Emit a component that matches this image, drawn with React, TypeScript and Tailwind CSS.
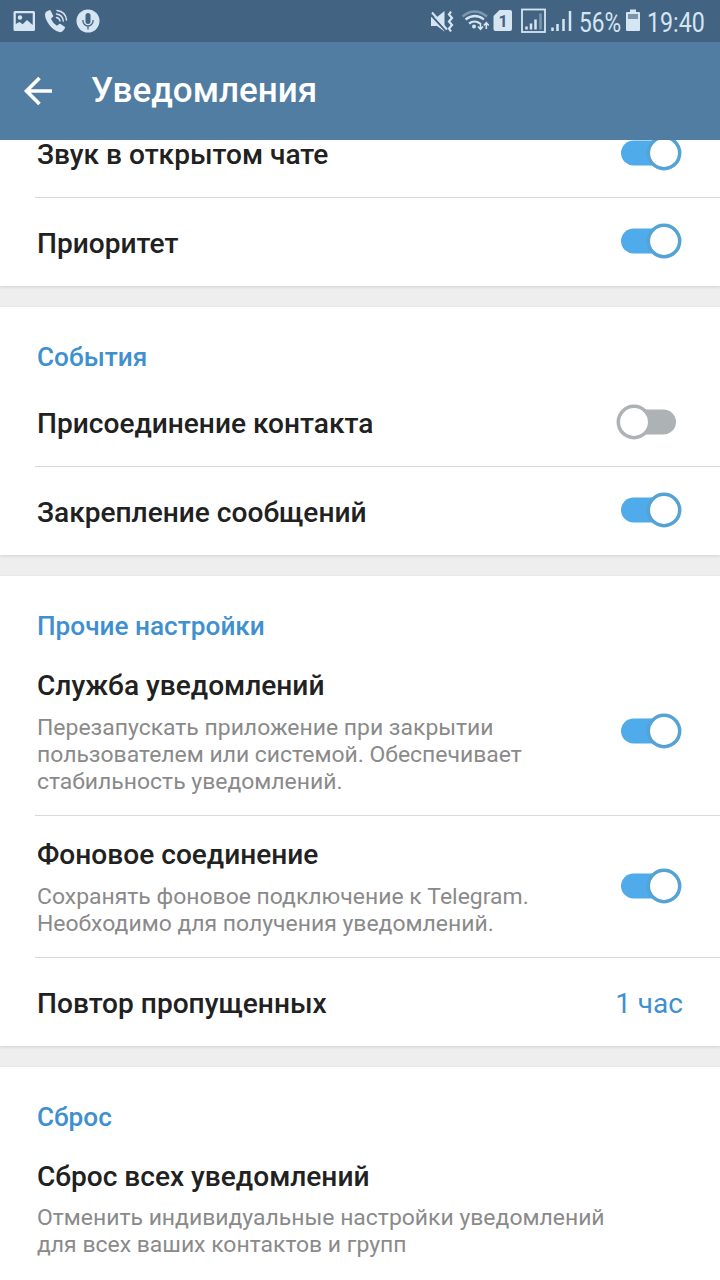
import { useState } from "react";
import type { ReactNode } from "react";
import clsx from "clsx";

function StatusBar() {
  return (
    <div className="h-[42px] shrink-0 bg-[#426482] text-[#d5e5f2] flex items-center">
      <svg width="110" height="42" viewBox="0 0 110 42" fill="none">
        <path fill="currentColor" fillRule="evenodd" d="M15 11h18.500a1.500 1.500 0 0 1 1.500 1.500v17a1.500 1.500 0 0 1-1.500 1.500H15a1.500 1.500 0 0 1-1.500-1.500v-17A1.500 1.500 0 0 1 15 11zm.8 2.300v10.700l3.700-2 3.200 2.200 4.300-4.200 5.700 5V13.300z" />
        <circle cx="20" cy="17.500" r="2.200" fill="currentColor" />
        <path fill="currentColor" d="M46.500 11.500l2.700-1.300q1-.4 1.500.6l2.400 4.600q.4 1-.4 1.700l-1.800 1.700q2 4.500 6 7l2-1.600q.8-.6 1.700-.1l4 2.600q.9.700.3 1.600l-1.600 2.300q-1.400 1.900-4 1.500-6-1.500-10.300-7.600-4-5.700-4-10 0-2 1.500-3z" />
        <g stroke="currentColor" strokeWidth="1.400" strokeLinecap="round">
          <path d="M56.500 17.500q3 .5 3.500 3.500" />
          <path d="M56.500 14q6 .8 6.800 7" />
          <path d="M57 10.500q8.500 1 9.500 9.500" />
        </g>
        <circle cx="88" cy="21" r="11.500" fill="currentColor" />
        <rect x="85.500" y="13" width="5" height="11" rx="2.500" fill="#426482" />
        <path d="M83 20v1a5 5 0 0 0 10 0v-1M88 26v3.500" stroke="#426482" strokeWidth="1.300" />
      </svg>
      <div className="flex-1" />
      <svg width="150" height="42" viewBox="426 0 150 42" fill="none">
        <path fill="currentColor" d="M431 17h6l7.500-6v20.500L437 26h-6z" />
        <path d="M430.500 14.500l15 16" stroke="#426482" strokeWidth="2" />
        <path d="M432 12.500l15 17" stroke="currentColor" strokeWidth="2" />
        <path d="M451 11.500l-2 3 3 3.500-3 3.500 3 3.500-3 3.500 2 3" stroke="currentColor" strokeWidth="2.200" />
        <path d="M462.500 16.500q12-10 24.500 0" stroke="currentColor" strokeWidth="2.500" opacity=".4" />
        <path d="M465.500 19.500q9.500-7 18.500 0M469 23.500q5.500-4 11 0" stroke="currentColor" strokeWidth="2.200" />
        <circle cx="474" cy="26.500" r="2" fill="currentColor" />
        <path d="M480.500 23v6m-2.500-2.500l2.500 2.700 2.500-2.700M486.300 29v-6m-2.500 2.500l2.500-2.700 2.500 2.700" stroke="currentColor" strokeWidth="1.600" />
        <path fill="currentColor" d="M499.500 10H510q2 0 2 2v17q0 2-2 2h-14.500q-2 0-2-2V16z" />
        <text x="498.500" y="27" fontSize="16" fontWeight="700" fontFamily="Roboto, sans-serif" fill="#426482">1</text>
        <rect x="522" y="9.500" width="23" height="22.500" stroke="currentColor" strokeWidth="1.800" />
        <path d="M526.500 29.500v-3M531 29.500v-6M535.500 29.500v-10" stroke="currentColor" strokeWidth="2.500" />
        <path d="M540.500 29.500V13.500" stroke="currentColor" strokeWidth="2.500" opacity=".4" />
        <path d="M552.500 31v-3.500M557.500 31v-7M563.500 31v-12" stroke="currentColor" strokeWidth="2.500" />
        <path d="M570 31V11" stroke="currentColor" strokeWidth="2.500" />
      </svg>
      <div className="w-[50px] pl-[3px] pt-[3px] text-[27px] leading-10 whitespace-nowrap">
        <span className="inline-block origin-left scale-x-[0.84]">56%</span>
      </div>
      <svg width="14" height="42" viewBox="0 0 14 42">
        <path fill="currentColor" d="M4 9.500h6V12h3q1 0 1 1v17q0 1-1 1H1q-1 0-1-1V13q0-1 1-1h3z" />
        <path fill="#7895ad" d="M2 14h10v5H2z" />
      </svg>
      <div className="w-20 pl-[7px] pt-[3px] text-[27px] leading-10 whitespace-nowrap">
        <span className="inline-block origin-left scale-x-[0.86]">19:40</span>
      </div>
    </div>
  );
}

function Toggle({ checked, onChange }: { checked: boolean; onChange: () => void }) {
  const color = checked ? "#4fabe9" : "#adb2b5";
  const ring = checked ? "#55a3d5" : "#adb2b5";
  return (
    <button role="switch" aria-checked={checked} onClick={onChange} className="w-[66px] h-9 shrink-0">
      <svg width="66" height="36" viewBox="0 0 66 36">
        <rect x={checked ? 5 : 10} y="5.500" width="50" height="25" rx="12.500" fill={color} />
        <circle cx={checked ? 48 : 18} cy="18" r="15.700" fill="#fff" stroke={ring} strokeWidth="3.500" />
      </svg>
    </button>
  );
}

function Row({ title, description, last, children }: {
  title: string;
  description?: ReactNode;
  last?: boolean;
  children?: ReactNode;
}) {
  return (
    <div className={clsx("ml-[35px] pl-0.5 pr-[38px] flex items-center justify-between", !last && "border-b border-[#d9d9d9]")}>
      <div className={description ? "pt-[25px] pb-5" : "pt-8 pb-7"}>
        <div className="text-[28.100px] leading-7 font-medium text-[#212121] whitespace-nowrap">{title}</div>
        {description && (
          <div className={clsx("text-[22.950px] leading-[27px] text-[#8a8a8a] whitespace-nowrap", last ? "mt-[13px]" : "mt-3.5")}>
            {description}
          </div>
        )}
      </div>
      {children && <div className={clsx("flex", last ? "pb-0.5" : description && "pb-px")}>{children}</div>}
    </div>
  );
}

function Section({ title, children }: { title?: string; children: ReactNode }) {
  return (
    <section className="bg-white shadow-[0_1px_3px_rgba(0,0,0,0.12)] mb-[21px] last:mb-0 last:pb-4">
      {title && <h2 className="h-[71px] pt-[35px] pl-[37px] text-[26.200px] leading-[30px] font-medium text-[#3e90cf]">{title}</h2>}
      {children}
    </section>
  );
}

export default function App() {
  const [settings, setSettings] = useState({
    sound: true,
    priority: true,
    contactJoined: false,
    pinned: true,
    service: true,
    background: true,
  });

  function toggle(key: keyof typeof settings) {
    return <Toggle checked={settings[key]} onChange={() => setSettings((s) => ({ ...s, [key]: !s[key] }))} />;
  }

  return (
    <div className="w-[720px] h-[1280px] flex flex-col overflow-hidden bg-[#eeeeee] font-['Roboto','Noto_Sans',sans-serif]">
      <StatusBar />
      <header className="h-[98px] shrink-0 bg-[#527da3] flex items-center text-white">
        <svg width="91" height="98" viewBox="0 0 91 98" fill="none" stroke="currentColor" strokeWidth="3.600">
          <path d="M52 49H26.500M39.500 36L26.500 49l13 13" />
        </svg>
        <h1 className="text-[35px] leading-10 font-medium">Уведомления</h1>
      </header>
      <main className="flex-1 min-h-0 overflow-hidden">
        {/* list is scrolled slightly, the first row slides under the header */}
        <div className="-mt-[31px]">
          <Section>
            <Row title="Звук в открытом чате">{toggle("sound")}</Row>
            <Row title="Приоритет" last>{toggle("priority")}</Row>
          </Section>
          <Section title="События">
            <Row title="Присоединение контакта">{toggle("contactJoined")}</Row>
            <Row title="Закрепление сообщений" last>{toggle("pinned")}</Row>
          </Section>
          <Section title="Прочие настройки">
            <Row
              title="Служба уведомлений"
              description={<>Перезапускать приложение при закрытии<br />пользователем или системой. Обеспечивает<br />стабильность уведомлений.</>}
            >
              {toggle("service")}
            </Row>
            <Row
              title="Фоновое соединение"
              description={<>Сохранять фоновое подключение к Telegram.<br />Необходимо для получения уведомлений.</>}
            >
              {toggle("background")}
            </Row>
            <Row title="Повтор пропущенных" last>
              <span className="-mr-px pt-1.5 text-[28px] leading-8 text-[#3e90cf]">1 час</span>
            </Row>
          </Section>
          <Section title="Сброс">
            <Row
              title="Сброс всех уведомлений"
              description={<>Отменить индивидуальные настройки уведомлений<br />для всех ваших контактов и групп</>}
              last
            />
          </Section>
        </div>
      </main>
    </div>
  );
}
